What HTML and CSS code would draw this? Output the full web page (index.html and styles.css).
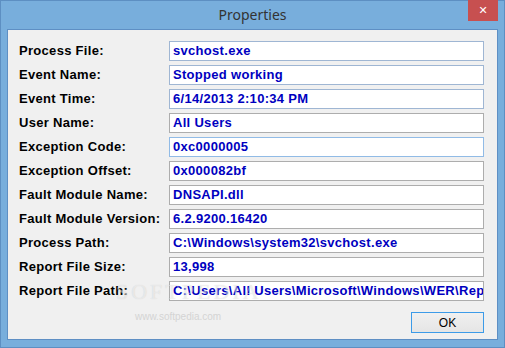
FILE: index.html
```html
<!DOCTYPE html>
<html lang="en">
<head>
    <meta charset="UTF-8">
    <title>Properties</title>
    <link rel="stylesheet" href="styles.css">
</head>
<body>
    <div class="window">
        <div class="titlebar">
            <span class="title">Properties</span>
            <button class="close-btn">&#x2715;</button>
        </div>
        <div class="client">
            <div class="fields">
                <label>Process File:</label>
                <div class="field hot">svchost.exe</div>
                <label>Event Name:</label>
                <div class="field hot">Stopped working</div>
                <label>Event Time:</label>
                <div class="field hot">6/14/2013 2:10:34 PM</div>
                <label>User Name:</label>
                <div class="field">All Users</div>
                <label>Exception Code:</label>
                <div class="field focus">0xc0000005</div>
                <label>Exception Offset:</label>
                <div class="field">0x000082bf</div>
                <label>Fault Module Name:</label>
                <div class="field">DNSAPI.dll</div>
                <label>Fault Module Version:</label>
                <div class="field">6.2.9200.16420</div>
                <label>Process Path:</label>
                <div class="field">C:\Windows\system32\svchost.exe</div>
                <label>Report File Size:</label>
                <div class="field">13,998</div>
                <label>Report File Path:</label>
                <div class="field">C:\Users\All Users\Microsoft\Windows\WER\ReportArchive</div>
            </div>
            <div class="buttons">
                <button class="ok-btn">OK</button>
            </div>
            <div class="watermark">SOFTPEDIA</div>
            <div class="watermark-url">www.softpedia.com</div>
        </div>
    </div>
</body>
</html>
```

FILE: styles.css
```css
body {
    margin: 0;
    background: #78aedc;
}
.window {
    width: 505px;
    height: 348px;
    box-sizing: border-box;
    background: #78aedc;
    border: 1px solid #5d8fc2;
}
.titlebar {
    position: relative;
    height: 28px;
    display: flex;
    align-items: center;
    justify-content: center;
}
.title {
    font-family: "Noto Sans", sans-serif;
    font-size: 14px;
    color: #333;
    margin-top: -1px;
}
.close-btn {
    position: absolute;
    top: -1px;
    right: 6px;
    width: 30px;
    height: 21px;
    border: none;
    background: #c75050;
    color: white;
    font-family: "DejaVu Sans", sans-serif;
    font-weight: bold;
    font-size: 11px;
    padding: 0;
}
.client {
    position: relative;
    margin: 0 6px 0 6px;
    height: 311px;
    box-sizing: border-box;
    border: 1px solid #5e8fc4;
    background: #f0f0f0;
    padding: 11px 13px 0 11px;
    font-family: "Liberation Sans", Arial, sans-serif;
    font-weight: bold;
    font-size: 13px;
    letter-spacing: 0.3px;
}
.fields {
    display: grid;
    grid-template-columns: 150px 1fr;
    row-gap: 4px;
}
.fields label {
    color: #000;
    line-height: 20px;
}
.field {
    height: 20px;
    box-sizing: border-box;
    border: 1px solid #adadad;
    background: white;
    color: #0000c0;
    padding-left: 3px;
    line-height: 18px;
    white-space: nowrap;
    overflow: hidden;
}
.field.hot {
    border-color: #9fb6d3;
}
.field.focus {
    border-color: #91bbe6;
}
.buttons {
    display: flex;
    justify-content: flex-end;
    margin-top: 11px;
}
.ok-btn {
    width: 73px;
    height: 21px;
    border: 1px solid #3c9be8;
    background: linear-gradient(#f0f0f0, #e5e5e5);
    font-family: "Liberation Sans", Arial, sans-serif;
    font-size: 12px;
    color: #000;
    padding: 0;
}
.watermark {
    position: absolute;
    left: 108px;
    top: 249px;
    font-family: "Liberation Serif", serif;
    font-size: 22px;
    letter-spacing: 3px;
    color: rgba(255, 255, 255, 0.5);
    text-shadow: 0 0 1px rgba(0, 0, 0, 0.15);
    font-weight: normal;
}
.watermark-url {
    position: absolute;
    left: 127px;
    top: 281px;
    font-size: 10px;
    font-weight: normal;
    letter-spacing: 0;
    color: #d4d4d4;
}
```
